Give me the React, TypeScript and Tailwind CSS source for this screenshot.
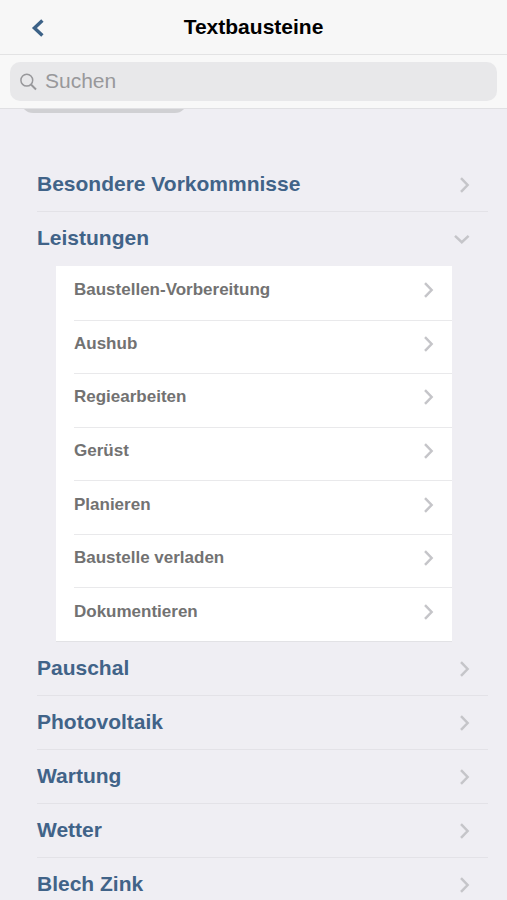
import { useState } from "react";

type Category = { name: string; items: string[] };

const categories: Category[] = [
  { name: "Besondere Vorkommnisse", items: [] },
  {
    name: "Leistungen",
    items: [
      "Baustellen-Vorbereitung",
      "Aushub",
      "Regiearbeiten",
      "Gerüst",
      "Planieren",
      "Baustelle verladen",
      "Dokumentieren",
    ],
  },
  { name: "Pauschal", items: [] },
  { name: "Photovoltaik", items: [] },
  { name: "Wartung", items: [] },
  { name: "Wetter", items: [] },
  { name: "Blech Zink", items: [] },
];

function ChevronRight() {
  return (
    <svg className="shrink-0" width="10" height="16" viewBox="0 0 10 16" fill="none" stroke="#c5c5c9" strokeWidth="2.5" aria-hidden="true">
      <path d="M1 1.2 7.6 8 1 14.8" />
    </svg>
  );
}

function ChevronDown() {
  return (
    <svg className="shrink-0" width="16" height="10" viewBox="0 0 16 10" fill="none" stroke="#c5c5c9" strokeWidth="2.5" aria-hidden="true">
      <path d="M1 1.8 7.8 8.2l6.8-6.4" />
    </svg>
  );
}

function SubList({ items }: { items: string[] }) {
  return (
    <ul className="ml-[19px] mr-9 grid h-[376px] auto-rows-fr border-b border-[#e2e2e5] bg-white pl-[18px]">
      {items.map((item) => (
        <li key={item} className="border-t border-[#e9e9eb] first:border-white">
          <button type="button" className="flex h-full w-full items-center justify-between pr-[18px] pb-1.5 text-left text-[17px] leading-5 font-bold text-[#727272]">
            {item}
            <ChevronRight />
          </button>
        </li>
      ))}
    </ul>
  );
}

export default function App() {
  const [open, setOpen] = useState("Leistungen");

  return (
    <div className="flex h-screen flex-col bg-[#efeef3] font-['Liberation_Sans',Arial,sans-serif]">
      <header className="grid h-[55px] shrink-0 grid-cols-[1fr_auto_1fr] items-center border-b border-[#e3e3e4] bg-[#f7f7f7]">
        <button type="button" aria-label="Zurück" className="ml-5 flex h-10 w-9 items-center justify-center justify-self-start pt-0.5">
          <svg width="14" height="18" viewBox="0 0 14 18" fill="none" stroke="#3c6287" strokeWidth="3.4" aria-hidden="true">
            <path d="M11.4 1.4 3.4 9l8 7.6" />
          </svg>
        </button>
        <h1 className="text-[21px] leading-6 font-bold text-black">Textbausteine</h1>
      </header>

      <div className="h-[54px] shrink-0 border-b border-[#e0e0e3] bg-[#f8f8f8] px-2.5 pt-[7px]">
        <label className="flex h-[39px] items-center gap-2 rounded-[10px] bg-[#e8e8ea] pl-2.5">
          <svg className="shrink-0" width="17" height="18" viewBox="0 0 17 18" fill="none" stroke="#98989b" strokeWidth="1.5" aria-hidden="true">
            <circle cx="6.8" cy="7.2" r="5.9" />
            <path d="m11 11.5 5 5" strokeWidth="2" />
          </svg>
          <input
            type="search"
            aria-label="Suchen"
            placeholder="Suchen"
            className="min-w-0 flex-1 bg-transparent pb-0.5 text-[21px] leading-6 text-black outline-none placeholder:text-[#98989b]"
          />
        </label>
      </div>

      <main className="min-h-0 flex-1 overflow-y-auto [scrollbar-width:none]">
        <div className="flex h-1 items-end overflow-hidden pl-[21px]">
          <div className="h-10 w-[166px] shrink-0 rounded-xl bg-[#d0d0d3]" />
        </div>
        <ul className="mt-[45px] mr-[19px] ml-[37px]">
          {categories.map(({ name, items }) => {
            const expanded = open === name && items.length > 0;
            return (
              <li key={name}>
                <button
                  type="button"
                  aria-expanded={expanded}
                  onClick={() => setOpen(expanded ? "" : name)}
                  className={`flex h-[54px] w-full items-center justify-between border-b pr-[18px] text-left text-[21px] leading-6 font-bold text-[#416388] ${
                    expanded ? "border-transparent" : "border-[#e3e2e7]"
                  }`}
                >
                  <span className="pb-0.5">{name}</span>
                  {expanded ? <ChevronDown /> : <ChevronRight />}
                </button>
                {expanded && <SubList items={items} />}
              </li>
            );
          })}
        </ul>
      </main>
    </div>
  );
}
